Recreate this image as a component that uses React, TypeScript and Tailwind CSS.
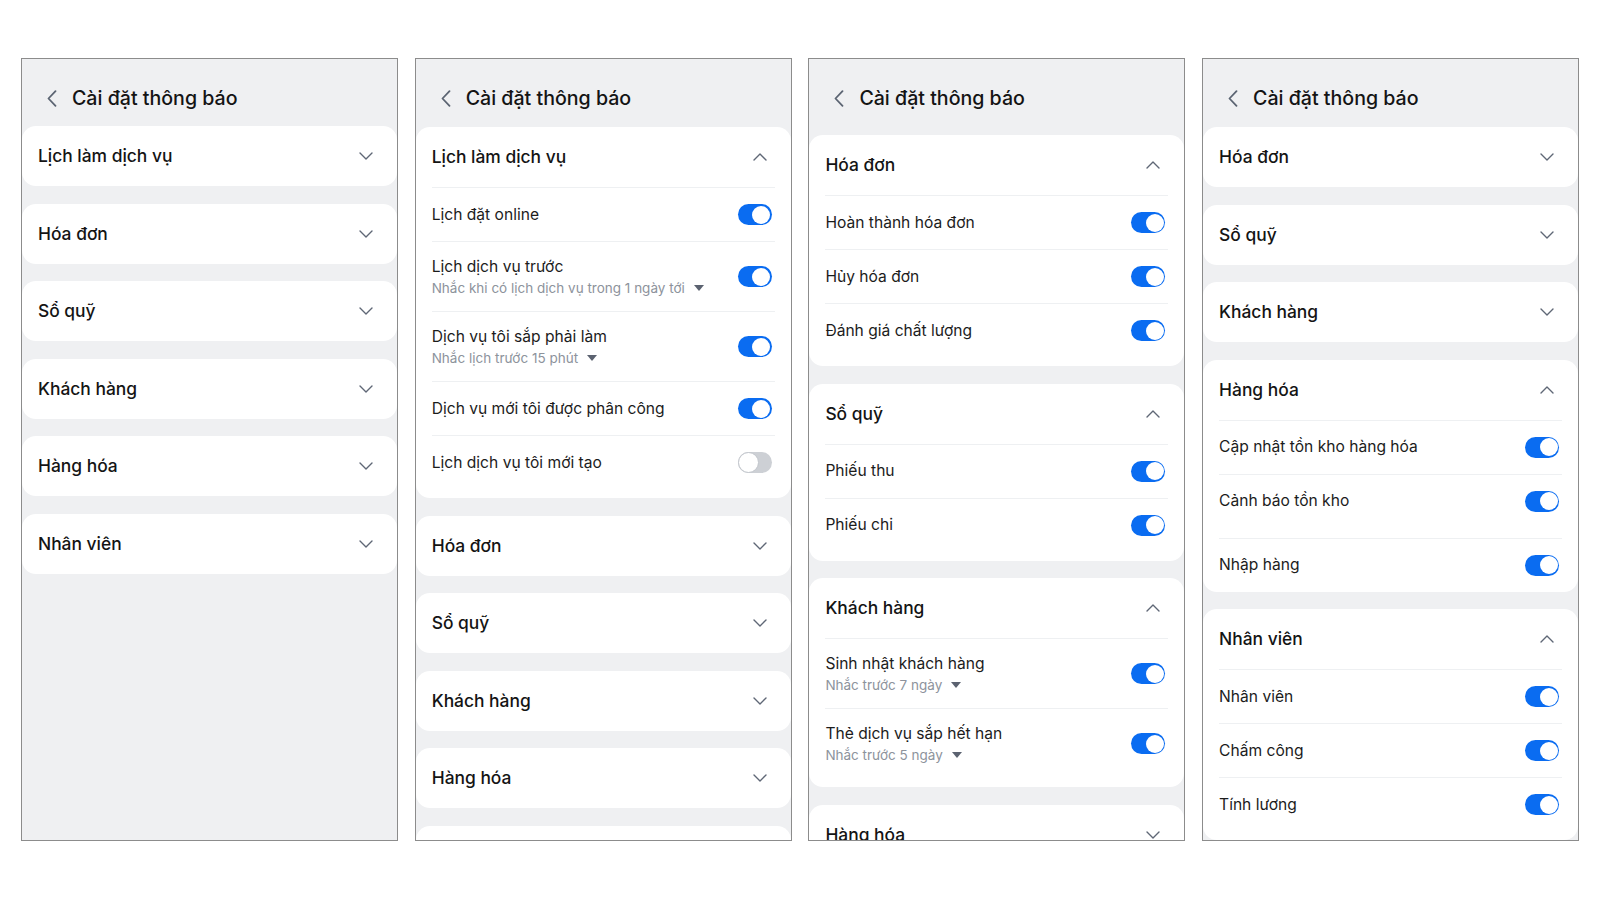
import React from "react";

type Item = { label: string; sub?: string; on?: boolean; tall?: boolean };
type Section = { title: string; open?: boolean; items?: Item[]; tight?: boolean };

function ChevronDown() {
  return (
    <svg width="14" height="8" viewBox="0 0 14 8" fill="none">
      <path d="M1 1l6 6 6-6" stroke="#5f6776" strokeWidth="1.4" strokeLinecap="round" strokeLinejoin="round" />
    </svg>
  );
}

function ChevronUp() {
  return (
    <svg width="14" height="8" viewBox="0 0 14 8" fill="none">
      <path d="M1 7l6-6 6 6" stroke="#5f6776" strokeWidth="1.4" strokeLinecap="round" strokeLinejoin="round" />
    </svg>
  );
}

function Caret() {
  return (
    <svg width="10" height="6" viewBox="0 0 10 6" className="ml-[9px]">
      <path d="M0 0h10L5 6z" fill="#5b6270" />
    </svg>
  );
}

function Toggle({ on = true }: { on?: boolean }) {
  return on ? (
    <div className="mr-[3px] flex h-[21px] w-[34px] shrink-0 items-center justify-end rounded-full bg-[#0a6cf1] pr-[1.5px]">
      <div className="h-[18px] w-[18px] rounded-full bg-white" />
    </div>
  ) : (
    <div className="mr-[3px] flex h-[21px] w-[34px] shrink-0 items-center rounded-full bg-[#cdd0d5]">
      <div className="h-[21px] w-[21px] rounded-full border border-[#c2c6cc] bg-white" />
    </div>
  );
}

function Header({ h }: { h: string }) {
  return (
    <div className={`flex shrink-0 items-start pl-[25px] pt-[25px] ${h}`}>
      <div className="flex h-[28px] items-center">
        <svg width="10" height="17" viewBox="0 0 10 17" fill="none">
          <path d="M8.5 1.2L1.5 8.5l7 7.3" stroke="#5b6472" strokeWidth="1.8" strokeLinecap="round" strokeLinejoin="round" />
        </svg>
        <h1 className="ml-[15px] text-[19.6px] leading-[28px] font-medium text-[#141414]">Cài đặt thông báo</h1>
      </div>
    </div>
  );
}

function Card({ section }: { section: Section }) {
  return (
    <div className={`shrink-0 rounded-[14px] bg-white ${section.open && !section.tight ? "pb-[9px]" : ""}`}>
      <div className="flex h-[60px] items-center justify-between pl-4 pr-6">
        <span className="text-[17.4px] font-medium text-[#141414]">{section.title}</span>
        {section.open ? <ChevronUp /> : <ChevronDown />}
      </div>
      {section.open &&
        section.items?.map(item => (
          <div
            key={item.label}
            className={`mx-4 flex items-center justify-between border-t border-[#eef0f2] ${
              item.sub ? "h-[70px]" : item.tall ? "h-[64px] pb-[10px]" : "h-[54px]"
            }`}
          >
            <div className="flex flex-col">
              <span className="text-[15.6px] leading-[20px] text-[#1c1c1c]">{item.label}</span>
              {item.sub && (
                <span className="mt-[2px] flex items-center text-[13.5px] leading-[18px] text-[#8d939c]">
                  {item.sub}
                  <Caret />
                </span>
              )}
            </div>
            <Toggle on={item.on !== false} />
          </div>
        ))}
    </div>
  );
}

function Phone({ header, sections }: { header: string; sections: Section[] }) {
  return (
    <div className="flex h-[783px] w-[377px] shrink-0 flex-col overflow-hidden border border-[#8c8c8c] bg-[#eff0f2]">
      <Header h={header} />
      <div className="flex flex-col gap-[17.6px]">
        {sections.map(s => (
          <Card key={s.title} section={s} />
        ))}
      </div>
    </div>
  );
}

const phone1: Section[] = [
  { title: "Lịch làm dịch vụ" },
  { title: "Hóa đơn" },
  { title: "Sổ quỹ" },
  { title: "Khách hàng" },
  { title: "Hàng hóa" },
  { title: "Nhân viên" },
];

const phone2: Section[] = [
  {
    title: "Lịch làm dịch vụ",
    open: true,
    items: [
      { label: "Lịch đặt online" },
      { label: "Lịch dịch vụ trước", sub: "Nhắc khi có lịch dịch vụ trong 1 ngày tới" },
      { label: "Dịch vụ tôi sắp phải làm", sub: "Nhắc lịch trước 15 phút" },
      { label: "Dịch vụ mới tôi được phân công" },
      { label: "Lịch dịch vụ tôi mới tạo", on: false },
    ],
  },
  { title: "Hóa đơn" },
  { title: "Sổ quỹ" },
  { title: "Khách hàng" },
  { title: "Hàng hóa" },
  { title: "Nhân viên" },
];

const phone3: Section[] = [
  {
    title: "Hóa đơn",
    open: true,
    items: [{ label: "Hoàn thành hóa đơn" }, { label: "Hủy hóa đơn" }, { label: "Đánh giá chất lượng" }],
  },
  { title: "Sổ quỹ", open: true, items: [{ label: "Phiếu thu" }, { label: "Phiếu chi" }] },
  {
    title: "Khách hàng",
    open: true,
    items: [
      { label: "Sinh nhật khách hàng", sub: "Nhắc trước 7 ngày" },
      { label: "Thẻ dịch vụ sắp hết hạn", sub: "Nhắc trước 5 ngày" },
    ],
  },
  { title: "Hàng hóa" },
];

const phone4: Section[] = [
  { title: "Hóa đơn" },
  { title: "Sổ quỹ" },
  { title: "Khách hàng" },
  {
    title: "Hàng hóa",
    open: true,
    tight: true,
    items: [{ label: "Cập nhật tồn kho hàng hóa" }, { label: "Cảnh báo tồn kho", tall: true }, { label: "Nhập hàng" }],
  },
  {
    title: "Nhân viên",
    open: true,
    items: [{ label: "Nhân viên" }, { label: "Chấm công" }, { label: "Tính lương" }],
  },
];

export default function App() {
  return (
    <div className="flex h-[900px] w-[1600px] gap-[16.7px] bg-white pl-[21px] pt-[58px] font-['Inter','Noto_Sans',sans-serif]">
      <Phone header="h-[67px]" sections={phone1} />
      <Phone header="h-[68px]" sections={phone2} />
      <Phone header="h-[76px]" sections={phone3} />
      <Phone header="h-[68px]" sections={phone4} />
    </div>
  );
}
